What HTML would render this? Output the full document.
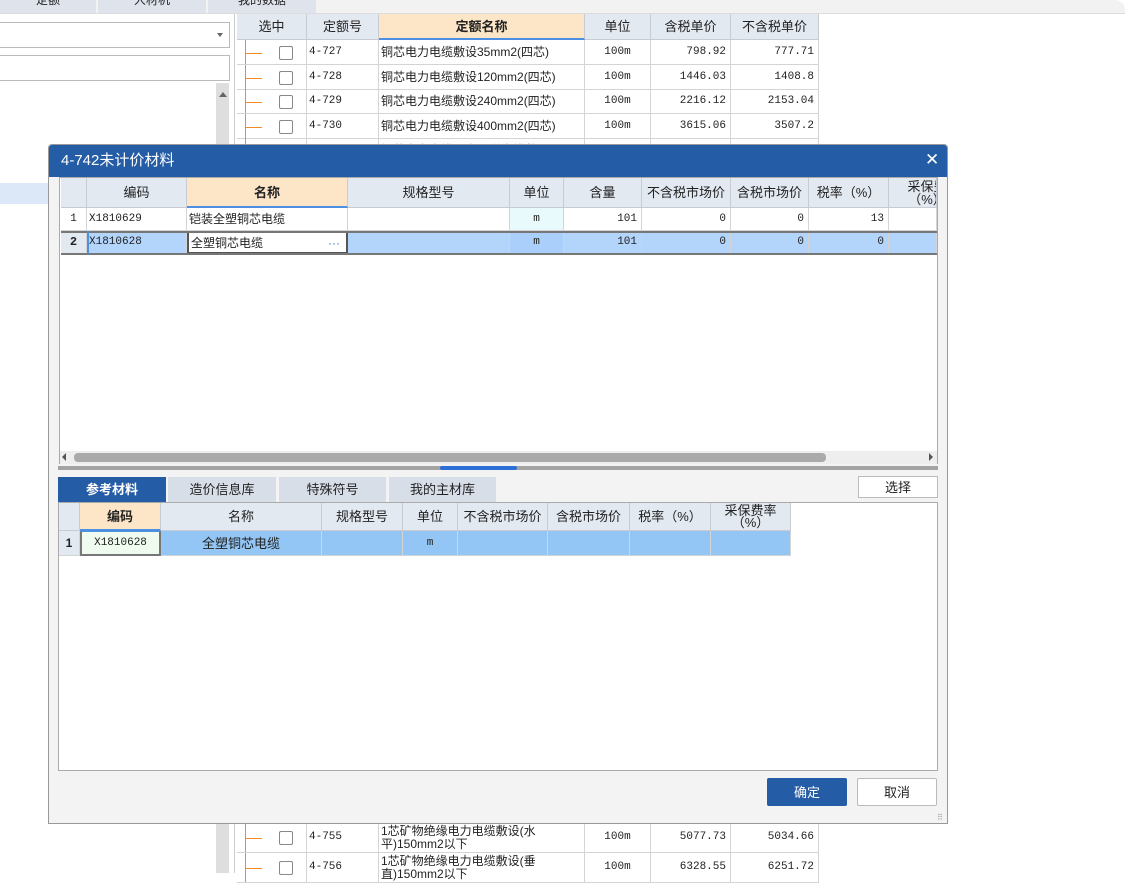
<!DOCTYPE html>
<html><head><meta charset="utf-8"><style>
*{box-sizing:border-box;margin:0;padding:0}
body{width:1125px;height:873px;position:relative;overflow:hidden;background:#fff;font-family:"Liberation Sans","Noto Sans CJK SC",sans-serif;font-size:12px;color:#222}
.a{position:absolute}
.c{position:absolute;display:flex;align-items:center;justify-content:center;white-space:nowrap;overflow:hidden;line-height:1}
.hd{background:#e3e9f1;border-right:1px solid #c8ccd2;border-bottom:1px solid #c8ccd2}
.cl{border-right:1px solid #d4d4d4;border-bottom:1px solid #d4d4d4}
.r{justify-content:flex-end;padding-right:4px}
.l{justify-content:flex-start;padding-left:2px}
.m{font-family:"Liberation Mono","Noto Sans CJK SC",monospace;font-size:11px}
.cb{width:14px;height:14px;border:1px solid #888;border-radius:2px;background:#fff}
</style></head><body>
<div class="a" style="left:0;top:0;width:1125px;height:14px;background:#f2f2f2;border-bottom:1px solid #ddd;border-top-right-radius:10px"></div>
<div class="c" style="left:0;top:0;width:96px;height:13px;background:#dfe4ec;align-items:flex-start"><span style="margin-top:-6px">定额</span></div>
<div class="c" style="left:98px;top:0;width:108px;height:13px;background:#dfe4ec;align-items:flex-start"><span style="margin-top:-6px">人材机</span></div>
<div class="c" style="left:208px;top:0;width:108px;height:13px;background:#dfe4ec;align-items:flex-start"><span style="margin-top:-6px">我的数据</span></div>
<div class="a" style="left:0;top:22px;width:230px;height:26px;border:1px solid #bbb;border-left:none;background:#fff"></div>
<div class="a" style="left:217px;top:33px;border:3px solid transparent;border-top:4px solid #666"></div>
<div class="a" style="left:0;top:55px;width:230px;height:26px;border:1px solid #bbb;border-left:none;background:#fff"></div>
<div class="a" style="left:216px;top:83px;width:13px;height:790px;background:#dedede"></div>
<div class="a" style="left:219px;top:88px;border:4px solid transparent;border-bottom:5px solid #666"></div>
<div class="a" style="left:0;top:183px;width:216px;height:21px;background:#dce8f8"></div>
<div class="a" style="left:234px;top:14px;width:1px;height:859px;background:#ccc"></div>
<div class="c hd" style="left:237px;top:14px;width:70px;height:26px;font-size:13px">选中</div>
<div class="c hd" style="left:307px;top:14px;width:72px;height:26px;font-size:13px">定额号</div>
<div class="c hd" style="left:379px;top:14px;width:206px;height:26px;background:#fde6c8;font-weight:bold;font-size:13px;border-bottom:2px solid #4d8fe0">定额名称</div>
<div class="c hd" style="left:585px;top:14px;width:66px;height:26px;font-size:13px">单位</div>
<div class="c hd" style="left:651px;top:14px;width:80px;height:26px;font-size:13px">含税单价</div>
<div class="c hd" style="left:731px;top:14px;width:88px;height:26px;font-size:13px">不含税单价</div>
<div id="rt"></div>
<div class="a" style="left:48px;top:144px;width:900px;height:680px;background:#f3f3f3;border:1px solid #999;border-radius:4px 4px 0 0"></div>
<div class="a" style="left:49px;top:145px;width:898px;height:32px;background:#255ca6;border-radius:3px 3px 0 0"></div>
<div class="a" style="left:61px;top:152px;color:#fff;font-size:15px;line-height:18px">4-742未计价材料</div>
<div class="a" style="left:925px;top:151px;color:#fff;font-size:17px;line-height:18px">✕</div>
<div class="a" style="left:59px;top:177px;width:879px;height:287px;background:#fff;border:1px solid #aaa"></div>
<div id="g1"></div>
<div class="a" style="left:60px;top:451px;width:877px;height:13px;background:#eee"></div>
<div class="a" style="left:74px;top:453px;width:752px;height:9px;background:#aaa;border-radius:4px"></div>
<div class="a" style="left:62px;top:453px;border:4px solid transparent;border-right:4px solid #555;border-left:none"></div>
<div class="a" style="left:929px;top:453px;border:4px solid transparent;border-left:4px solid #555;border-right:none"></div>
<div class="a" style="left:58px;top:466px;width:880px;height:4px;background:#a3a3a3"></div>
<div class="a" style="left:440px;top:466px;width:77px;height:4px;background:#2d6fd4;border-radius:2px"></div>
<div class="c" style="left:58px;top:477px;width:108px;height:25px;background:#255ca6;color:#fff;font-weight:bold;font-size:13px">参考材料</div>
<div class="c" style="left:168px;top:477px;width:108px;height:25px;background:#d8dee8;font-size:13px">造价信息库</div>
<div class="c" style="left:279px;top:477px;width:107px;height:25px;background:#d8dee8;font-size:13px">特殊符号</div>
<div class="c" style="left:389px;top:477px;width:107px;height:25px;background:#d8dee8;font-size:13px">我的主材库</div>
<div class="c" style="left:858px;top:476px;width:80px;height:22px;background:#fff;border:1px solid #bbb;font-size:13px">选择</div>
<div class="a" style="left:58px;top:502px;width:880px;height:269px;background:#fff;border:1px solid #aaa"></div>
<div id="g2"></div>
<div class="c" style="left:767px;top:778px;width:80px;height:28px;background:#255ca6;color:#fff;border-radius:2px;font-size:13px">确定</div>
<div class="c" style="left:857px;top:778px;width:80px;height:28px;background:#fff;border:1px solid #bbb;border-radius:2px;font-size:13px">取消</div>
<div class="a" style="left:937px;top:813px;color:#999;font-size:8px">⠿</div>
<script>
var T=document.getElementById('rt');
function C(x,y,w,h,t,cls,st){var d=document.createElement('div');d.className='c '+(cls||'');d.style.cssText='left:'+x+'px;top:'+y+'px;width:'+w+'px;height:'+h+'px;'+(st||'');d.innerHTML=t;T.appendChild(d);}
var rows=[[40,'4-727','铜芯电力电缆敷设35mm2(四芯)','798.92','777.71'],[65,'4-728','铜芯电力电缆敷设120mm2(四芯)','1446.03','1408.8'],[89,'4-729','铜芯电力电缆敷设240mm2(四芯)','2216.12','2153.04'],[114,'4-730','铜芯电力电缆敷设400mm2(四芯)','3615.06','3507.2'],[138,'4-731','铜芯电力电缆竖直通道电缆敷设35mm2(四','3815.75','3830.51'],[823,'4-755','1芯矿物绝缘电力电缆敷设(水<br>平)150mm2以下','5077.73','5034.66'],[853,'4-756','1芯矿物绝缘电力电缆敷设(垂<br>直)150mm2以下','6328.55','6251.72']];
rows.forEach(function(r,i){var h=i>=5?30:25;var y=r[0];
C(237,y,70,h,'<span class="a" style="left:8px;top:0;width:1px;height:'+h+'px;background:#f08a24"></span><span class="a" style="left:9px;top:'+(h/2)+'px;width:16px;height:1px;background:#f08a24"></span><span class="a cb" style="left:42px;top:'+(h/2-7)+'px"></span>','cl');
C(307,y,72,h,r[1],'cl l m');
C(379,y,206,h,r[2],'cl l',i>=5?'line-height:13px;white-space:normal':'');
C(585,y,66,h,'100m','cl m');C(651,y,80,h,r[3],'cl r m');C(731,y,88,h,r[4],'cl r m');});
T=document.getElementById('g1');
var c1=[[61,26,''],[87,100,'编码'],[187,161,'名称'],[348,162,'规格型号'],[510,54,'单位'],[564,78,'含量'],[642,89,'不含税市场价'],[731,78,'含税市场价'],[809,80,'税率（%）'],[889,48,'<div style="text-align:center;width:60px;flex-shrink:0">采保费<br>（%）</div>']];
c1.forEach(function(c,i){C(c[0],178,c[1],30,c[2],'hd',(i==2?'background:#fde6c8;font-weight:bold;border-bottom:2px solid #4d8fe0;':'')+'font-size:13px;'+(i==9?'line-height:13px;justify-content:flex-start;padding-left:8px':''));});
var d1=[['1','X1810629','铠装全塑铜芯电缆','','m','101','0','0','13',''],['2','X1810628','全塑铜芯电缆','','m','101','0','0','0','']];
d1.forEach(function(r,j){var y=208+j*23;c1.forEach(function(c,i){var cls='cl',st='';if(i==0)cls+=' m';else if(i==1)cls+=' l m';else if(i==2)cls+=' l';else if(i==4)cls+=' m';else if(i>=5)cls+=' r m';
if(i==0)st+='background:'+(j?'#e3e9f1;font-weight:bold;font-size:12px':'#fff')+';';
else if(j==1)st+='background:#b3d4fb;';
if(i==4)st+='background:'+(j?'#a9cffa':'#e8fafc')+';';
if(j==1&&i==2)st+='background:#fff;border:2px solid #555;';
C(c[0],y,c[1],23,r[i]+(j==1&&i==2?'<span class="a" style="right:6px;color:#3a7bd5">···</span>':''),cls,st);});});
C(61,231,876,2,'','','background:#777');C(61,253,876,2,'','','background:#777');
C(87,231,2,23,'','','background:#4d8fe0');
T=document.getElementById('g2');
var c2=[[59,21,''],[80,81,'编码'],[161,161,'名称'],[322,81,'规格型号'],[403,55,'单位'],[458,90,'不含税市场价'],[548,82,'含税市场价'],[630,81,'税率（%）'],[711,80,'采保费率<br>（%）']];
c2.forEach(function(c,i){C(c[0],503,c[1],28,c[2],'hd',(i==1?'background:#fde6c8;font-weight:bold;border-bottom:2px solid #4d8fe0;':'')+'font-size:13px;'+(i==8?'line-height:12px;white-space:normal;text-align:center;':''));});
var d2=['1','X1810628','全塑铜芯电缆','','m','','','',''];
c2.forEach(function(c,i){var st='background:#93c6f4;',cls='cl';if(i==0){st='background:#e3e9f1;font-weight:bold;';}if(i==1){st='background:#f0fbf0;border:2px solid #777;border-top:1px solid #4d8fe0';cls+=' m';}if(i==4)cls+=' m';if(i==2)st+='font-size:13px;';C(c[0],531,c[1],25,d2[i],cls,st);});
</script>
</body></html>
